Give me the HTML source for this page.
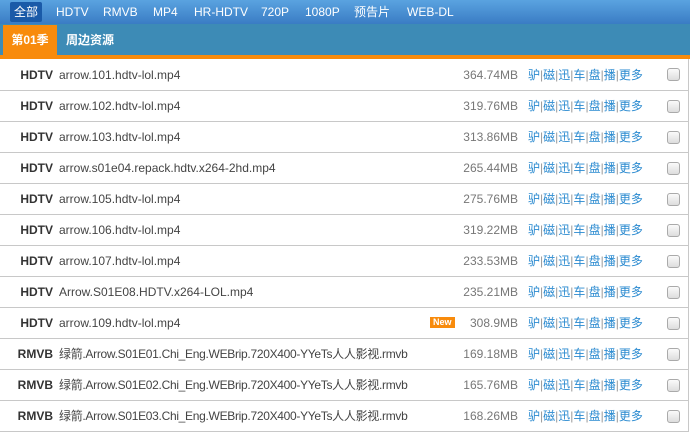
<!DOCTYPE html>
<html><head><meta charset="utf-8"><style>
*{margin:0;padding:0;box-sizing:border-box}
body{width:690px;height:434px;overflow:hidden;background:#fff;font-family:"Liberation Sans","Noto Sans CJK SC",sans-serif;font-size:12px}
.top{height:24px;background:linear-gradient(#5aa3e0,#3a7cc4);position:relative}
.top span{position:absolute;top:0;line-height:24px;color:#fff;font-size:12px}
.top .act{background:#1a5aa8;border-radius:2px;padding:0 4px;top:2px;line-height:20px;left:10px}
.sub{height:31px;background:#3d8bb6;position:relative}
.sub span{position:absolute;top:0;line-height:32px;color:#fff;font-weight:bold;font-size:12px}
.sub .o{background:#f88b0c;left:3px;width:54px;top:1px;height:30px;line-height:30px;text-align:center}
.ol{height:4px;background:#f88b0c}
.row{height:31px;border-bottom:1px solid #c8c8c8;position:relative;color:#444;font-size:12px}
.row.first{height:32px;padding-top:1px}
.row div{position:absolute;top:0;line-height:30px}
.row.first div{top:1px}
.l{right:635px;font-weight:bold;color:#333}
.f{left:59px}
.cj{letter-spacing:-0.3px}
.s{right:170px;color:#777}
.k{left:528px;color:#2a8ad0}
.k i{font-style:normal;color:#999}
.row div.c{left:667px;top:9px;width:13px;height:13px;border:1px solid #aaa;border-radius:3px;background:linear-gradient(#fafafa,#ddd)}
.row div.n{left:430px;top:9px;line-height:11px;height:11px;background:#f88b0c;color:#fff;font-size:9px;font-weight:bold;padding:0 3px}
.wrap{border-right:1px solid #c8c8c8;width:689px}
</style></head><body>
<div class="top"><span class="act">全部</span><span style="left:56px">HDTV</span><span style="left:103px">RMVB</span><span style="left:153px">MP4</span><span style="left:194px">HR-HDTV</span><span style="left:261px">720P</span><span style="left:305px">1080P</span><span style="left:354px">预告片</span><span style="left:407px">WEB-DL</span></div>
<div class="sub"><span class="o">第01季</span><span style="left:66px">周边资源</span></div>
<div class="ol"></div>
<div class="wrap">
<div class="row first"><div class="l">HDTV</div><div class="f">arrow.101.hdtv-lol.mp4</div><div class="s">364.74MB</div><div class="k">驴<i>|</i>磁<i>|</i>迅<i>|</i>车<i>|</i>盘<i>|</i>播<i>|</i>更多</div><div class="c"></div></div>
<div class="row"><div class="l">HDTV</div><div class="f">arrow.102.hdtv-lol.mp4</div><div class="s">319.76MB</div><div class="k">驴<i>|</i>磁<i>|</i>迅<i>|</i>车<i>|</i>盘<i>|</i>播<i>|</i>更多</div><div class="c"></div></div>
<div class="row"><div class="l">HDTV</div><div class="f">arrow.103.hdtv-lol.mp4</div><div class="s">313.86MB</div><div class="k">驴<i>|</i>磁<i>|</i>迅<i>|</i>车<i>|</i>盘<i>|</i>播<i>|</i>更多</div><div class="c"></div></div>
<div class="row"><div class="l">HDTV</div><div class="f">arrow.s01e04.repack.hdtv.x264-2hd.mp4</div><div class="s">265.44MB</div><div class="k">驴<i>|</i>磁<i>|</i>迅<i>|</i>车<i>|</i>盘<i>|</i>播<i>|</i>更多</div><div class="c"></div></div>
<div class="row"><div class="l">HDTV</div><div class="f">arrow.105.hdtv-lol.mp4</div><div class="s">275.76MB</div><div class="k">驴<i>|</i>磁<i>|</i>迅<i>|</i>车<i>|</i>盘<i>|</i>播<i>|</i>更多</div><div class="c"></div></div>
<div class="row"><div class="l">HDTV</div><div class="f">arrow.106.hdtv-lol.mp4</div><div class="s">319.22MB</div><div class="k">驴<i>|</i>磁<i>|</i>迅<i>|</i>车<i>|</i>盘<i>|</i>播<i>|</i>更多</div><div class="c"></div></div>
<div class="row"><div class="l">HDTV</div><div class="f">arrow.107.hdtv-lol.mp4</div><div class="s">233.53MB</div><div class="k">驴<i>|</i>磁<i>|</i>迅<i>|</i>车<i>|</i>盘<i>|</i>播<i>|</i>更多</div><div class="c"></div></div>
<div class="row"><div class="l">HDTV</div><div class="f">Arrow.S01E08.HDTV.x264-LOL.mp4</div><div class="s">235.21MB</div><div class="k">驴<i>|</i>磁<i>|</i>迅<i>|</i>车<i>|</i>盘<i>|</i>播<i>|</i>更多</div><div class="c"></div></div>
<div class="row"><div class="l">HDTV</div><div class="f">arrow.109.hdtv-lol.mp4</div><div class="n">New</div><div class="s">308.9MB</div><div class="k">驴<i>|</i>磁<i>|</i>迅<i>|</i>车<i>|</i>盘<i>|</i>播<i>|</i>更多</div><div class="c"></div></div>
<div class="row"><div class="l">RMVB</div><div class="f cj">绿箭.Arrow.S01E01.Chi_Eng.WEBrip.720X400-YYeTs人人影视.rmvb</div><div class="s">169.18MB</div><div class="k">驴<i>|</i>磁<i>|</i>迅<i>|</i>车<i>|</i>盘<i>|</i>播<i>|</i>更多</div><div class="c"></div></div>
<div class="row"><div class="l">RMVB</div><div class="f cj">绿箭.Arrow.S01E02.Chi_Eng.WEBrip.720X400-YYeTs人人影视.rmvb</div><div class="s">165.76MB</div><div class="k">驴<i>|</i>磁<i>|</i>迅<i>|</i>车<i>|</i>盘<i>|</i>播<i>|</i>更多</div><div class="c"></div></div>
<div class="row"><div class="l">RMVB</div><div class="f cj">绿箭.Arrow.S01E03.Chi_Eng.WEBrip.720X400-YYeTs人人影视.rmvb</div><div class="s">168.26MB</div><div class="k">驴<i>|</i>磁<i>|</i>迅<i>|</i>车<i>|</i>盘<i>|</i>播<i>|</i>更多</div><div class="c"></div></div>
</div>
</body></html>
